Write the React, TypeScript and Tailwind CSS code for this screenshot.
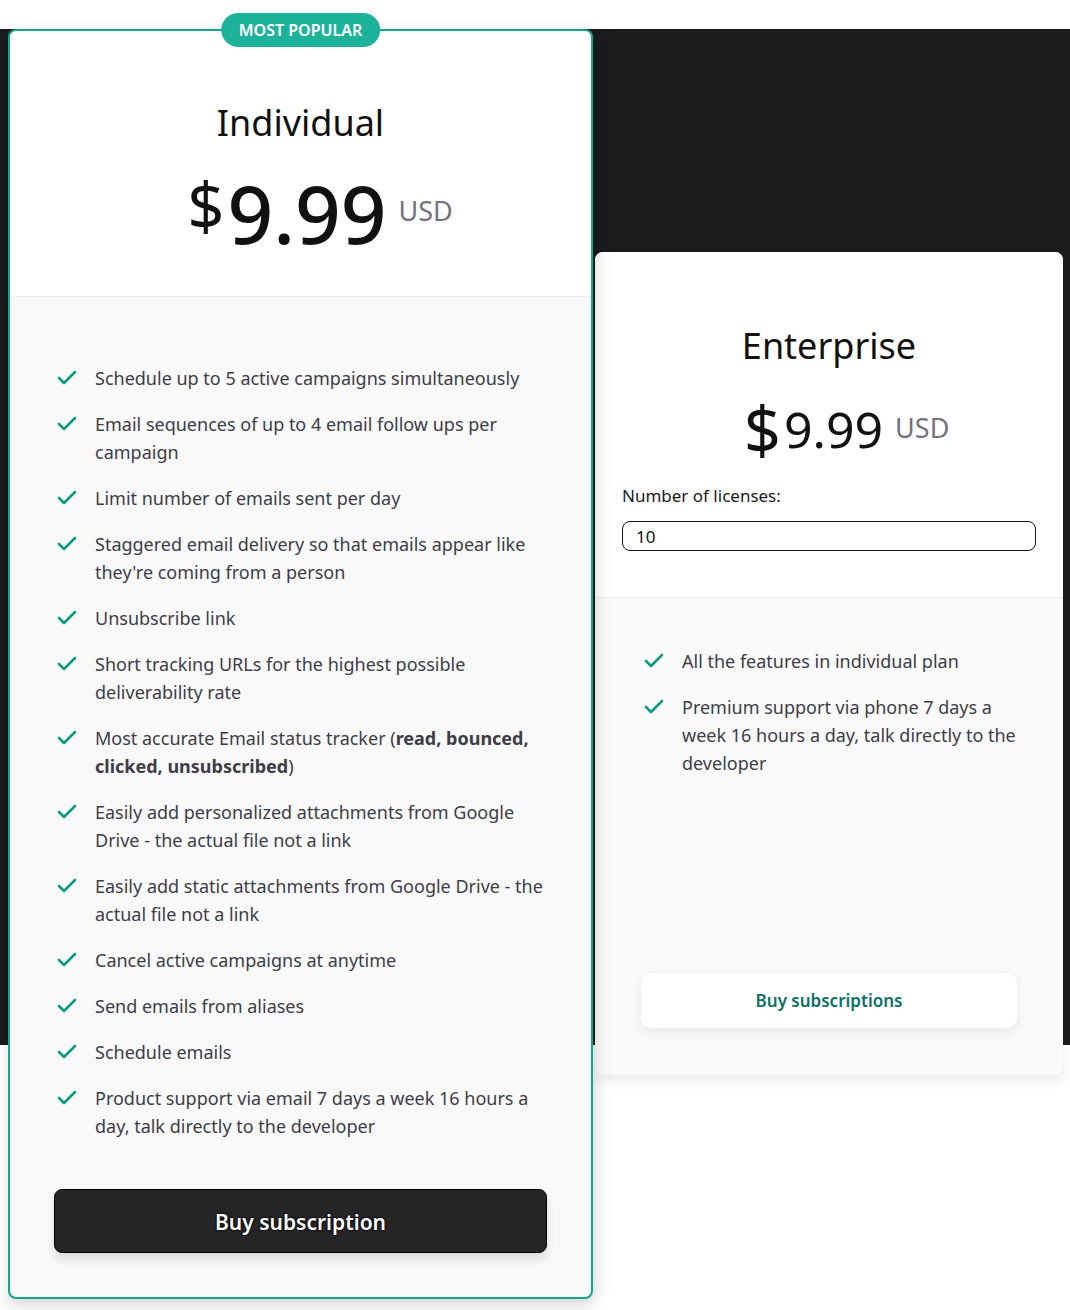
import React from 'react';

const FONT = "font-['Noto_Sans',_'Open_Sans',_sans-serif]";

const INDIVIDUAL_FEATURES: React.ReactNode[] = [
  'Schedule up to 5 active campaigns simultaneously',
  'Email sequences of up to 4 email follow ups per campaign',
  'Limit number of emails sent per day',
  "Staggered email delivery so that emails appear like they're coming from a person",
  'Unsubscribe link',
  'Short tracking URLs for the highest possible deliverability rate',
  <>
    Most accurate Email status tracker (<b className="font-bold">read, bounced, clicked, unsubscribed</b>)
  </>,
  'Easily add personalized attachments from Google Drive - the actual file not a link',
  'Easily add static attachments from Google Drive - the actual file not a link',
  'Cancel active campaigns at anytime',
  'Send emails from aliases',
  'Schedule emails',
  'Product support via email 7 days a week 16 hours a day, talk directly to the developer',
];

const ENTERPRISE_FEATURES = [
  'All the features in individual plan',
  'Premium support via phone 7 days a week 16 hours a day, talk directly to the developer',
];

const CheckIcon = () => (
  <svg
    viewBox="0 0 24 24"
    className="w-6 h-6 flex-shrink-0 mt-[2px] ml-[1px]"
    fill="none"
    stroke="#0f9b83"
    strokeWidth={2.6}
    strokeLinecap="round"
    strokeLinejoin="round"
  >
    <path d="M20 6 9 17l-5-5" />
  </svg>
);

const FeatureList = ({ items }: { items: React.ReactNode[] }) => (
  <ul className="flex flex-col gap-[18px] -mr-[10px]">
    {items.map((item, i) => (
      <li key={i} className="flex items-start gap-4 text-[18px] leading-[28px] text-[#3d3d47]">
        <CheckIcon />
        <span>{item}</span>
      </li>
    ))}
  </ul>
);

// price row: the number sits in the middle column so it stays centred
const Price = ({ size }: { size: 'lg' | 'md' }) => (
  <div className="grid grid-cols-[1fr_auto_1fr] items-start w-full">
    <span className="justify-self-end text-[65px] leading-none text-[#111]">$</span>
    {size === 'lg' ? (
      <span className="ml-[3px] text-[80px] leading-none font-medium text-[#111]">9.99</span>
    ) : (
      <span className="ml-[3px] mt-[7px] text-[50px] leading-none text-[#111]">9.99</span>
    )}
    <span
      className={`justify-self-start ml-3 text-[27px] leading-none text-[#72727c] ${
        size === 'lg' ? 'mt-[24px]' : 'mt-[17px]'
      }`}
    >
      USD
    </span>
  </div>
);

export default function App() {
  return (
    <div
      className={`${FONT} min-h-[1310px] w-[1070px] bg-[linear-gradient(to_bottom,#ffffff_29px,#1b1a1c_29px,#1b1a1c_1045px,#ffffff_1045px)]`}
    >
      <div className="flex items-start pl-2 pt-[29px]">
        {/* Individual plan */}
        <div className="relative z-10 w-[585px] h-[1270px] flex flex-col rounded-lg border-2 border-[#16a68d] bg-[#f9f9f9] shadow-[0_8px_14px_rgba(0,0,0,0.12),8px_0_16px_rgba(0,0,0,0.05)]">
          <span className="absolute left-1/2 -translate-x-1/2 -top-[18px] rounded-full bg-[#1db39a] px-[18px] h-[34px] flex items-center text-[16px] font-semibold text-white whitespace-nowrap">
            MOST POPULAR
          </span>
          <div className="bg-white rounded-t-lg h-[266px] flex flex-col items-center pt-[70px] border-b border-[#efefef]">
            <h2 className="text-[36px] leading-[44px] text-[#111]">Individual</h2>
            <div className="mt-[28px] w-full pl-[10px]">
              <Price size="lg" />
            </div>
          </div>
          <div className="flex-1 flex flex-col px-[44px] pt-[67px] pb-[44px]">
            <FeatureList items={INDIVIDUAL_FEATURES} />
            <button className="mt-auto h-[64px] w-full rounded-lg border border-black bg-[#252527] pt-[3px] text-white text-[21px] font-semibold shadow-[0_6px_10px_rgba(0,0,0,0.12)] [text-shadow:0_0_2px_#000,0_0_2px_#000]">
              Buy subscription
            </button>
          </div>
        </div>

        {/* Enterprise plan */}
        <div className="ml-[2px] mt-[223px] w-[468px] h-[823px] flex flex-col rounded-lg bg-[#fafafa] shadow-[0_6px_12px_rgba(0,0,0,0.08)]">
          <div className="bg-white rounded-t-lg h-[346px] flex flex-col px-[27px] pt-[72px] border-b border-[#efefef]">
            <h2 className="text-[36px] leading-[44px] text-[#111] text-center">Enterprise</h2>
            <div className="mt-[29px] pl-[6px]">
              <Price size="md" />
            </div>
            <label className="mt-[22px] text-[17px] leading-[24px] text-[#1a1a1a]">Number of licenses:</label>
            <input
              defaultValue="10"
              className="mt-[13px] h-[30px] w-full rounded-lg border border-[#111] bg-white px-[13px] text-[17px] text-[#111] outline-none"
            />
          </div>
          <div className="flex-1 flex flex-col px-[46px] pt-[49px] pb-[47px]">
            <FeatureList items={ENTERPRISE_FEATURES} />
            <button className="mt-auto h-[55px] w-full rounded-[10px] bg-white text-[17px] font-semibold text-[#0d7166] shadow-[0_4px_12px_rgba(0,0,0,0.08)]">
              Buy subscriptions
            </button>
          </div>
        </div>
      </div>
    </div>
  );
}
